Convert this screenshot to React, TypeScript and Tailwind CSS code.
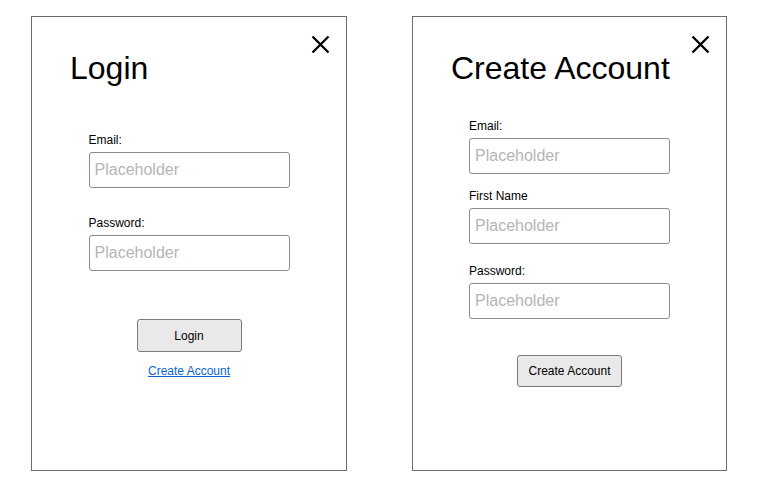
import type { ReactNode } from "react";

function CloseIcon() {
  return (
    <svg
      width="19"
      height="19"
      viewBox="0 0 19 19"
      className="absolute top-[18px] right-[16px]"
    >
      <path d="M1.5 1.5 L17.5 17.5 M17.5 1.5 L1.5 17.5" stroke="#000" strokeWidth="2.3" fill="none" />
    </svg>
  );
}

function Field({ label, className }: { label: string; className?: string }) {
  return (
    <div className={className}>
      <div className="text-[12px] leading-[14px] text-black mb-[5px]">{label}</div>
      <input
        type="text"
        placeholder="Placeholder"
        className="w-[201px] h-[36px] border border-[#8c8c8c] rounded-[3px] pl-[5px] text-[16px] text-black placeholder:text-[#b5b5b5] bg-white outline-none"
      />
    </div>
  );
}

function Panel({ title, width, children }: { title: string; width: string; children: ReactNode }) {
  return (
    <div className={`relative ${width} h-[455px] border border-[#6b6b6b] bg-white`}>
      <CloseIcon />
      <h1 className="pt-[33px] pl-[38px] text-[32px] leading-[36px] font-normal text-black">{title}</h1>
      <div className="w-[201px] mx-auto flex flex-col">{children}</div>
    </div>
  );
}

export default function App() {
  return (
    <div
      className="w-[762px] h-[492px] bg-white flex gap-[65px] pt-[16px] pl-[31px]"
      style={{ fontFamily: '"Liberation Sans", Arial, sans-serif' }}
    >
      {/* Login */}
      <Panel title="Login" width="w-[316px]">
        <Field label="Email:" className="mt-[47px]" />
        <Field label="Password:" className="mt-[28px]" />
        <button className="self-center mt-[48px] w-[105px] h-[33px] bg-[#e9e9e9] border border-[#7a7a7a] rounded-[3px] text-[12px] text-black">
          Login
        </button>
        <a href="#" className="self-center mt-[12px] text-[12px] leading-[14px] text-[#0b63d0] underline">
          Create Account
        </a>
      </Panel>

      {/* Create Account */}
      <Panel title="Create Account" width="w-[315px]">
        <Field label="Email:" className="mt-[33px]" />
        <Field label="First Name" className="mt-[15px]" />
        <Field label="Password:" className="mt-[20px]" />
        <button className="self-center mt-[36px] w-[105px] h-[32px] bg-[#e9e9e9] border border-[#7a7a7a] rounded-[3px] text-[12px] text-black">
          Create Account
        </button>
      </Panel>
    </div>
  );
}
